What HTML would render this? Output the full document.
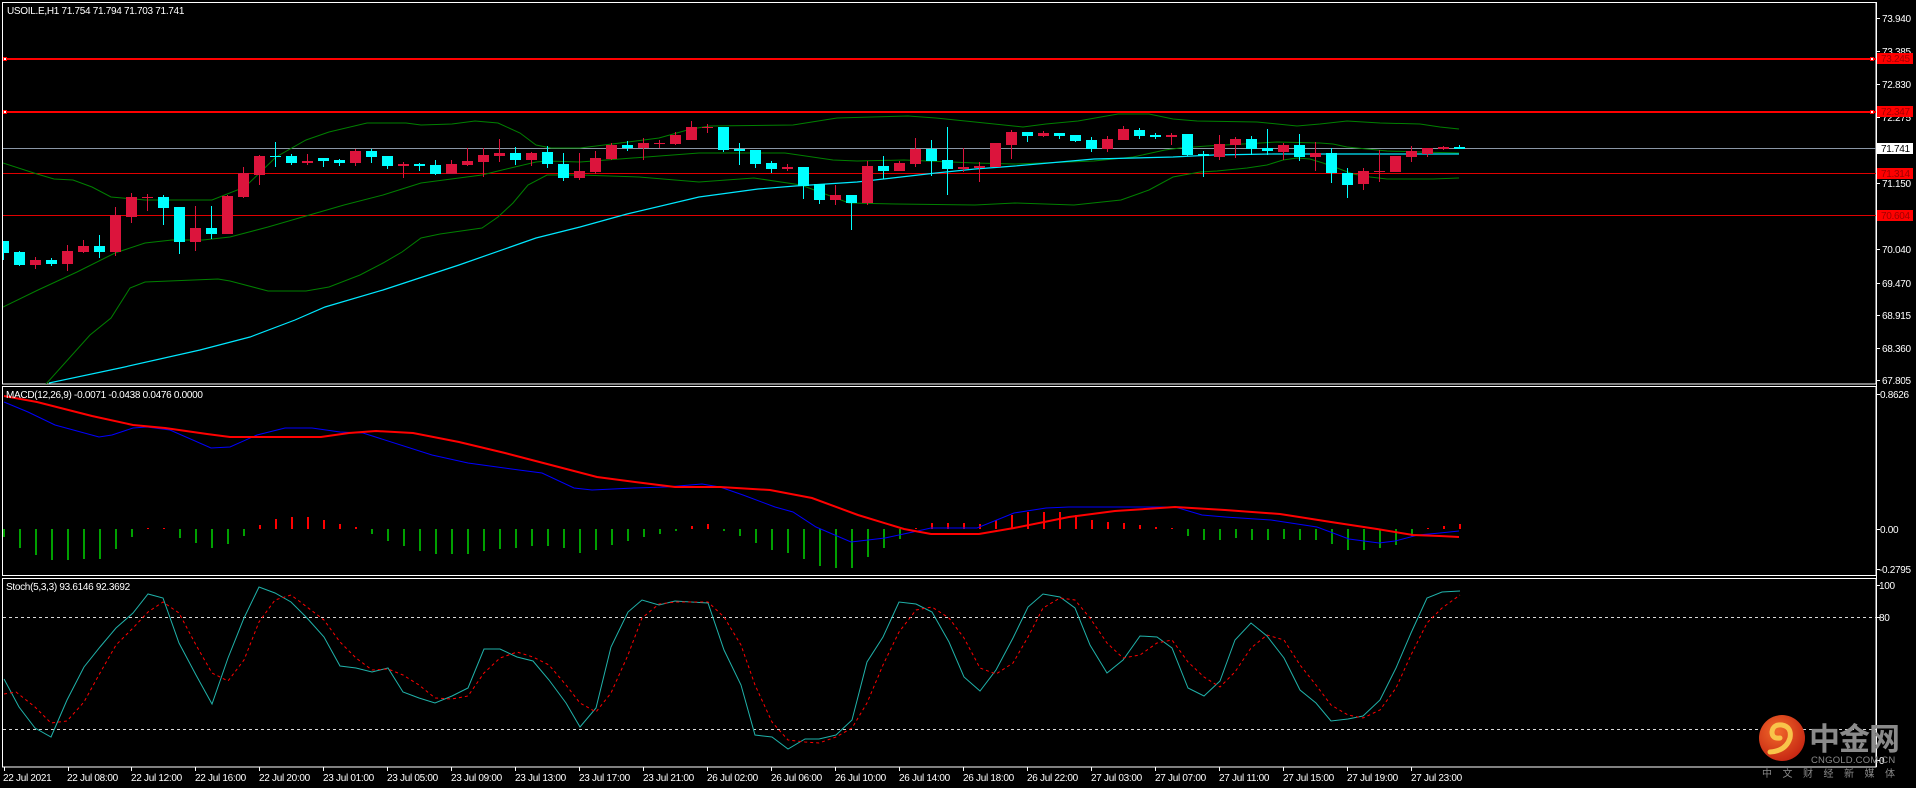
<!DOCTYPE html>
<html><head><meta charset="utf-8"><style>
html,body{margin:0;padding:0;background:#000;overflow:hidden}
svg{display:block}
text{font-family:"Liberation Sans","Noto Sans CJK SC",sans-serif;font-size:10px;fill:#fff;letter-spacing:-0.3px}
</style></head><body>
<svg width="1916" height="788" viewBox="0 0 1916 788" xmlns="http://www.w3.org/2000/svg">
<defs>
<clipPath id="cm"><rect x="3" y="3" width="1873" height="381"/></clipPath>
<clipPath id="cd"><rect x="3" y="387" width="1873" height="189"/></clipPath>
<clipPath id="cs"><rect x="3" y="579" width="1873" height="188"/></clipPath>
<radialGradient id="lg" cx="0.4" cy="0.35" r="0.7"><stop offset="0" stop-color="#f26a2a"/><stop offset="1" stop-color="#c42412"/></radialGradient>
</defs>
<rect width="1916" height="788" fill="#000"/>
<!-- panel borders -->
<g fill="none" stroke="#fff" stroke-width="1">
<rect x="2.5" y="2.5" width="1873.5" height="381.5"/>
<rect x="2.5" y="386.5" width="1873.5" height="189"/>
<rect x="2.5" y="578.5" width="1873.5" height="188.5"/>
<line x1="1876.5" y1="2" x2="1876.5" y2="767"/>
</g>

<!-- MAIN CHART -->
<g clip-path="url(#cm)">
<line x1="3" y1="59" x2="1876" y2="59" stroke="#ff0000" stroke-width="2"/>
<line x1="3" y1="112" x2="1876" y2="112" stroke="#ff0000" stroke-width="2"/>
<line x1="3" y1="148.5" x2="1876" y2="148.5" stroke="#8a96a6" stroke-width="1"/>
<line x1="3" y1="173.5" x2="1876" y2="173.5" stroke="#e00000" stroke-width="1"/>
<line x1="3" y1="215.5" x2="1876" y2="215.5" stroke="#e00000" stroke-width="1"/>
<g fill="none" stroke="#008000" stroke-width="1">
<polyline points="3,163 37,174 54,179 73,180 92,187 111,197 145,200 212,200 245,187 276,157 306,140 329,132 367,123 406,123 421,125 452,124 475,121 498,123 520,133 536,145 551,148 580,148 620,143 659,138 691,129 710,126 793,125 837,118 908,116 936,118 975,122 1023,127 1046,124 1078,121 1118,114 1149,114 1173,119 1197,121 1257,122 1297,126 1320,124 1347,121 1380,123 1420,124 1440,127 1459,129"/>
<polyline points="3,307 38,290 77,272 115,253 145,243 172,240 203,240 230,237 268,227 306,216 344,205 383,195 421,183 459,178 482,175 498,171 536,162 547,161 580,162 699,153 785,153 833,160 857,161 904,160 975,163 1015,164 1094,161 1133,157 1165,150 1180,148 1207,146 1243,144 1277,142 1320,143 1333,144 1347,147 1367,149 1387,151 1420,152 1459,153"/>
<polyline points="46,384 90,335 111,318 130,288 145,282 218,279 230,281 268,291 306,291 329,287 360,275 383,263 402,252 421,238 440,234 482,228 498,217 513,203 528,185 547,175 580,175 639,177 699,182 754,178 801,185 849,203 896,204 975,205 1015,203 1074,205 1121,200 1149,190 1173,177 1200,172 1217,171 1247,168 1267,165 1283,160 1297,158 1310,159 1323,163 1337,168 1353,174 1370,177 1387,179 1433,179 1459,178"/>
</g>
<polyline fill="none" stroke="#00e8ff" stroke-width="1.2" points="49,383 120,368 200,350 250,337 295,320 325,307 383,290 459,265 536,238 580,227 627,214 699,197 758,189 795,186 857,182 936,173 975,169 1015,166 1094,159 1173,157 1213,155 1273,154 1459,154"/>
<!-- red candles -->
<path fill="none" stroke="#dc143c" stroke-width="1" d="M35.5 257V269M67.5 245V271M83.5 240V253M115.5 207V256M131.5 193V223M147.5 194V211M195.5 206V251M227.5 195V234M243.5 167V198M259.5 155V185M307.5 154V165M355.5 149V166M403.5 162V178M451.5 160V174M467.5 148V166M483.5 148V177M499.5 139V162M531.5 152V166M579.5 153V180M595.5 151V174M611.5 143V160M643.5 138V160M659.5 140V148M675.5 132V145M691.5 121V140M707.5 124V133M787.5 164V171M835.5 185V205M867.5 161V205M899.5 161V171M915.5 138V167M963.5 148V172M979.5 162V182M995.5 143V167M1011.5 130V159M1043.5 131V137M1107.5 136V152M1123.5 126V140M1171.5 133V145M1219.5 135V160M1235.5 137V158M1283.5 143V160M1315.5 142V171M1363.5 168V190M1379.5 150V182M1395.5 156V172M1411.5 146V162M1427.5 148V157M1443.5 146V150"/>
<path fill="#dc143c" d="M30 260h11v5h-11zM62 251h11v13h-11zM78 246h11v6h-11zM110 215h11v37h-11zM126 197h11v20h-11zM142 197h11v1h-11zM190 228h11v14h-11zM222 196h11v38h-11zM238 173h11v24h-11zM254 156h11v19h-11zM302 161h11v2h-11zM350 151h11v12h-11zM398 164h11v2h-11zM446 164h11v10h-11zM462 161h11v4h-11zM478 155h11v7h-11zM494 153h11v3h-11zM526 153h11v7h-11zM574 171h11v7h-11zM590 158h11v14h-11zM606 145h11v14h-11zM638 143h11v5h-11zM654 143h11v1h-11zM670 135h11v9h-11zM686 127h11v13h-11zM702 127h11v1h-11zM782 167h11v2h-11zM830 195h11v5h-11zM862 166h11v37h-11zM894 163h11v8h-11zM910 149h11v15h-11zM958 167h11v2h-11zM974 166h11v2h-11zM990 143h11v24h-11zM1006 132h11v13h-11zM1038 133h11v3h-11zM1102 139h11v10h-11zM1118 129h11v11h-11zM1166 135h11v2h-11zM1214 144h11v13h-11zM1230 139h11v6h-11zM1278 145h11v7h-11zM1310 153h11v4h-11zM1358 171h11v13h-11zM1374 171h11v1h-11zM1390 156h11v16h-11zM1406 151h11v6h-11zM1422 148h11v6h-11zM1438 147h11v2h-11z"/>
<!-- cyan candles -->
<path fill="none" stroke="#00ffff" stroke-width="1" d="M3.5 241V260M19.5 251V266M51.5 258V266M99.5 235V258M163.5 195V225M179.5 207V254M211.5 206V239M275.5 142V167M291.5 154V165M323.5 158V167M339.5 159V166M371.5 149V163M387.5 156V169M419.5 163V171M435.5 160V175M515.5 147V165M547.5 146V168M563.5 153V181M627.5 141V151M723.5 127V152M739.5 143V165M755.5 150V168M771.5 161V173M803.5 167V199M819.5 184V204M851.5 195V230M883.5 156V179M931.5 140V176M947.5 127V195M1027.5 132V142M1059.5 133V139M1075.5 135V142M1091.5 137V152M1139.5 128V139M1155.5 133V139M1187.5 134V156M1203.5 151V177M1251.5 136V155M1267.5 129V155M1299.5 134V161M1331.5 148V183M1347.5 168V198M1459.5 145V149"/>
<path fill="#00ffff" d="M-2 241h11v12h-11zM14 252h11v13h-11zM46 260h11v4h-11zM94 246h11v6h-11zM158 197h11v11h-11zM174 207h11v35h-11zM206 228h11v6h-11zM270 156h11v1h-11zM286 156h11v7h-11zM318 158h11v3h-11zM334 160h11v3h-11zM366 151h11v6h-11zM382 156h11v10h-11zM414 164h11v2h-11zM430 165h11v9h-11zM510 153h11v7h-11zM542 152h11v12h-11zM558 164h11v14h-11zM622 145h11v3h-11zM718 127h11v23h-11zM734 149h11v2h-11zM750 150h11v14h-11zM766 163h11v6h-11zM798 167h11v19h-11zM814 184h11v16h-11zM846 195h11v8h-11zM878 166h11v5h-11zM926 149h11v12h-11zM942 160h11v9h-11zM1022 132h11v4h-11zM1054 133h11v3h-11zM1070 135h11v6h-11zM1086 140h11v9h-11zM1134 130h11v6h-11zM1150 135h11v2h-11zM1182 134h11v21h-11zM1198 154h11v2h-11zM1246 139h11v10h-11zM1262 148h11v3h-11zM1294 145h11v12h-11zM1326 153h11v20h-11zM1342 173h11v12h-11zM1454 147h11v2h-11z"/>
</g>
<!-- line end markers -->
<g fill="#fff" stroke="#ff0000" stroke-width="1">
<rect x="3.5" y="57.5" width="3" height="3"/><rect x="3.5" y="110.5" width="3" height="3"/>
<rect x="1870.5" y="57.5" width="3" height="3"/><rect x="1870.5" y="110.5" width="3" height="3"/>
</g>
<text x="7" y="14">USOIL.E,H1  71.754 71.794 71.703 71.741</text>

<!-- right axis main -->
<g stroke="#fff" stroke-width="1">
<path d="M1876 18.5h4M1876 51.5h4M1876 84.5h4M1876 117.5h4M1876 150.5h4M1876 183.5h4M1876 216.5h4M1876 249.5h4M1876 283.5h4M1876 315.5h4M1876 348.5h4M1876 380.5h4M1876 394.5h4M1876 529.5h4M1876 569.5h4M1876 585.5h4M1876 617.5h4M1876 760.5h4"/>
</g>
<g>
<text x="1882" y="22">73.940</text>
<text x="1882" y="55">73.385</text>
<text x="1882" y="88">72.830</text>
<text x="1882" y="121">72.275</text>
<text x="1882" y="187">71.150</text>
<text x="1882" y="253">70.040</text>
<text x="1882" y="287">69.470</text>
<text x="1882" y="319">68.915</text>
<text x="1882" y="352">68.360</text>
<text x="1882" y="384">67.805</text>
</g>
<g>
<rect x="1877" y="53" width="36" height="11" fill="#ff0000"/><text x="1881" y="62" style="fill:#a00000">73.245</text>
<rect x="1877" y="106" width="36" height="11" fill="#ff0000"/><text x="1881" y="115" style="fill:#a00000">72.347</text>
<rect x="1877" y="143" width="36" height="11" fill="#fff"/><text x="1881" y="152" style="fill:#000">71.741</text>
<rect x="1877" y="168" width="36" height="11" fill="#ff0000"/><text x="1881" y="177" style="fill:#a00000">71.314</text>
<rect x="1877" y="210" width="36" height="11" fill="#ff0000"/><text x="1881" y="219" style="fill:#a00000">70.604</text>
</g>

<!-- MACD -->
<g clip-path="url(#cd)">
<path fill="none" stroke="#00a000" stroke-width="2" d="M4 529v8M20 529v19M36 529v26M52 529v31M68 529v31M84 529v30M100 529v30M116 529v20M132 529v8M180 529v9M196 529v14M212 529v19M228 529v15M244 529v7M372 529v5M388 529v12M404 529v17M420 529v22M436 529v25M452 529v25M468 529v25M484 529v22M500 529v20M516 529v19M532 529v17M548 529v17M564 529v19M580 529v24M596 529v21M612 529v16M628 529v12M644 529v8M660 529v5M676 529v2M724 529v2M740 529v7M756 529v14M772 529v21M788 529v24M804 529v30M820 529v37M836 529v39M852 529v39M868 529v28M884 529v19M900 529v10M1188 529v7M1204 529v11M1220 529v11M1236 529v9M1252 529v11M1268 529v11M1284 529v10M1300 529v11M1316 529v11M1332 529v15M1348 529v21M1364 529v21M1380 529v19M1396 529v16M1412 529v7"/>
<path fill="none" stroke="#ff0000" stroke-width="2" d="M148 529v-1M164 529v-1M260 529v-4M276 529v-10M292 529v-12M308 529v-12M324 529v-9M340 529v-5M356 529v-2M692 529v-3M708 529v-5M916 529v-1M932 529v-6M948 529v-6M964 529v-6M980 529v-5M996 529v-9M1012 529v-14M1028 529v-17M1044 529v-17M1060 529v-17M1076 529v-14M1092 529v-9M1108 529v-7M1124 529v-6M1140 529v-4M1156 529v-2M1172 529v-1M1428 529v-1M1444 529v-3M1460 529v-5"/>
<polyline fill="none" stroke="#0000ff" stroke-width="1" points="4,402 28,412 55,425 99,437 112,435 133,428 147,427 170,430 211,448 230,447 257,435 285,428 312,428 340,432 363,433 432,455 468,463 519,470 542,473 574,488 592,490 634,488 666,487 702,484 720,487 743,495 775,507 793,512 816,527 851,542 885,538 913,532 931,528 977,528 1014,513 1046,508 1069,507 1119,507 1175,507 1202,515 1225,517 1271,520 1317,527 1349,539 1379,543 1395,541 1418,535 1440,533 1459,531"/>
<polyline fill="none" stroke="#ff0000" stroke-width="2" points="4,396 37,402 92,416 133,425 165,428 207,434 230,437 321,437 349,433 376,431 413,433 459,442 505,453 551,465 597,477 643,483 675,487 720,487 770,490 812,498 858,515 904,529 931,534 979,534 1014,528 1069,517 1115,511 1175,507 1225,510 1280,514 1331,522 1377,529 1413,535 1440,536 1459,537"/>
</g>
<text x="6" y="398">MACD(12,26,9) -0.0071 -0.0438 0.0476 0.0000</text>
<text x="1880" y="398">0.8626</text>
<text x="1880" y="533">0.00</text>
<text x="1879" y="573">-0.2795</text>

<!-- STOCH -->
<g clip-path="url(#cs)">
<g stroke="#d8d8d8" stroke-width="1" stroke-dasharray="3,3">
<line x1="3" y1="617.5" x2="1876" y2="617.5"/>
<line x1="3" y1="729.5" x2="1876" y2="729.5"/>
</g>
<polyline fill="none" stroke="#20b2aa" stroke-width="1" points="4,679 19,707 35,728 51,737 67,700 84,667 100,647 116,628 133,613 148,594 163,598 179,643 196,675 212,704 228,658 244,618 259,587 275,593 291,602 307,618 324,637 340,666 356,668 372,672 388,668 403,692 419,698 435,703 452,696 468,688 484,649 500,649 517,657 533,661 549,680 566,703 580,727 596,708 611,647 628,612 642,600 659,605 675,601 691,602 708,603 724,650 741,685 755,735 772,737 788,749 805,739 819,739 836,735 852,720 867,662 883,637 899,602 916,604 932,612 949,642 964,677 980,691 996,670 1013,638 1028,607 1043,594 1060,597 1075,608 1090,645 1107,673 1123,660 1140,636 1157,637 1172,648 1188,688 1204,696 1220,681 1235,640 1251,623 1267,636 1284,658 1300,690 1316,703 1331,721 1348,719 1363,716 1380,700 1396,668 1411,633 1427,598 1442,592 1460,591"/>
<polyline fill="none" stroke="#ff0000" stroke-width="1" stroke-dasharray="3,3" points="4,694 16,692 35,707 51,723 67,721 84,702 100,673 116,645 133,628 148,612 163,602 179,613 196,645 212,673 228,681 244,660 259,622 275,600 291,595 307,607 324,620 340,642 356,658 372,670 388,669 403,675 419,685 435,698 452,699 468,696 484,673 500,658 517,652 533,657 549,665 566,685 580,703 596,712 611,693 628,655 642,618 659,604 675,602 691,602 708,602 724,617 741,645 755,685 772,722 788,740 805,742 819,743 836,737 852,728 867,703 883,665 899,632 916,610 932,607 949,618 964,638 980,668 996,674 1013,663 1028,637 1043,608 1060,598 1075,600 1090,618 1107,643 1123,658 1140,655 1157,643 1172,640 1188,662 1204,677 1220,687 1235,672 1251,648 1267,635 1284,640 1300,665 1316,685 1331,705 1348,715 1363,718 1380,710 1396,688 1411,655 1427,623 1442,608 1460,595"/>
</g>
<text x="6" y="590">Stoch(5,3,3) 93.6146 92.3692</text>
<text x="1879" y="589">100</text>
<text x="1879" y="621">80</text>
<text x="1879" y="764">0</text>

<!-- time axis -->
<path stroke="#fff" stroke-width="1" d="M4.5 767v4M68.5 767v4M131.5 767v4M195.5 767v4M259.5 767v4M323.5 767v4M387.5 767v4M451.5 767v4M515.5 767v4M579.5 767v4M643.5 767v4M707.5 767v4M771.5 767v4M835.5 767v4M899.5 767v4M963.5 767v4M1027.5 767v4M1091.5 767v4M1155.5 767v4M1219.5 767v4M1283.5 767v4M1347.5 767v4M1411.5 767v4"/>
<g>
<text x="3" y="781">22 Jul 2021</text>
<text x="67" y="781">22 Jul 08:00</text>
<text x="131" y="781">22 Jul 12:00</text>
<text x="195" y="781">22 Jul 16:00</text>
<text x="259" y="781">22 Jul 20:00</text>
<text x="323" y="781">23 Jul 01:00</text>
<text x="387" y="781">23 Jul 05:00</text>
<text x="451" y="781">23 Jul 09:00</text>
<text x="515" y="781">23 Jul 13:00</text>
<text x="579" y="781">23 Jul 17:00</text>
<text x="643" y="781">23 Jul 21:00</text>
<text x="707" y="781">26 Jul 02:00</text>
<text x="771" y="781">26 Jul 06:00</text>
<text x="835" y="781">26 Jul 10:00</text>
<text x="899" y="781">26 Jul 14:00</text>
<text x="963" y="781">26 Jul 18:00</text>
<text x="1027" y="781">26 Jul 22:00</text>
<text x="1091" y="781">27 Jul 03:00</text>
<text x="1155" y="781">27 Jul 07:00</text>
<text x="1219" y="781">27 Jul 11:00</text>
<text x="1283" y="781">27 Jul 15:00</text>
<text x="1347" y="781">27 Jul 19:00</text>
<text x="1411" y="781">27 Jul 23:00</text>
</g>

<!-- logo -->
<circle cx="1782" cy="738" r="23" fill="url(#lg)"/>
<path d="M1770 752 q16 -1 20 -14 q2 -11 -8 -13 q-9 -1 -10 7 q0 7 8 6" fill="none" stroke="#f8c44a" stroke-width="5" stroke-linecap="round"/>
<text x="1809" y="750" style="font-size:31px;font-weight:bold;fill:#8a8a8a;letter-spacing:-1px">中金网</text>
<text x="1811" y="763" style="font-size:9.5px;fill:#8a8a8a;letter-spacing:0.2px">CNGOLD.COM.CN</text>
<text x="1762" y="777" style="font-size:10px;fill:#8a8a8a;letter-spacing:10.5px">中文财经新媒体</text>
</svg>
</body></html>
